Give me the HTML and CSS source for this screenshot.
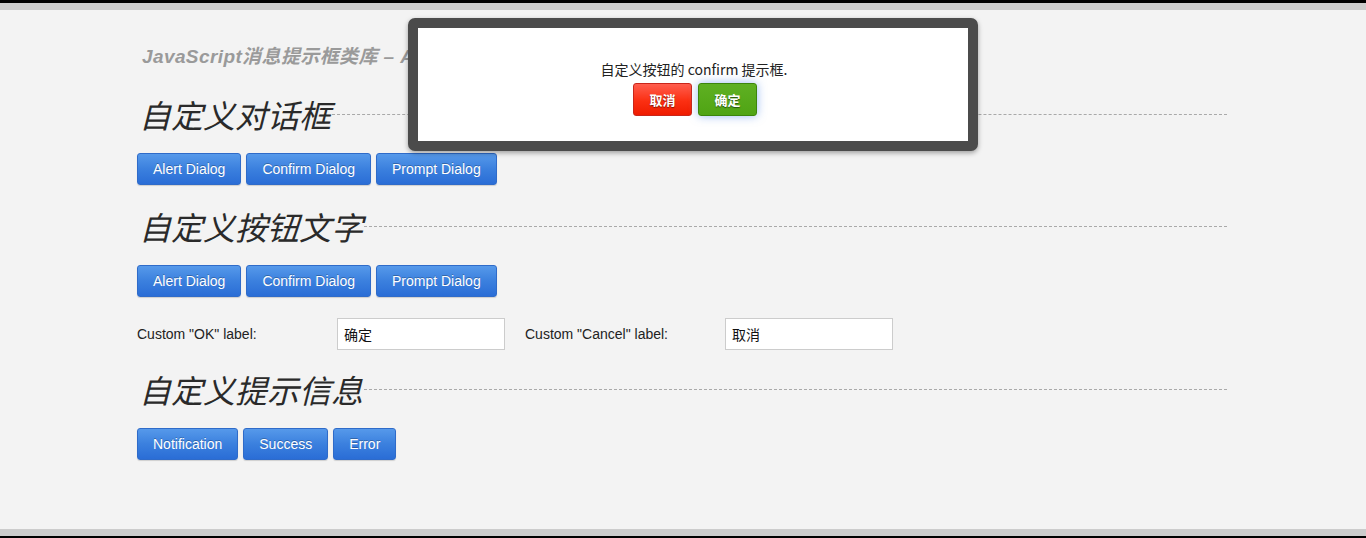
FILE: index.html
```html
<!DOCTYPE html>
<html lang="zh-CN">
<head>
<meta charset="utf-8">
<title>JavaScript消息提示框类库</title>
<link rel="stylesheet" href="styles.css">
</head>
<body>
<div class="frame">
  <div class="topbar"></div>
  <main class="page">
    <div class="container">
      <h1 class="title">JavaScript消息提示框类库 – Alertify.js</h1>

      <h2 class="heading">自定义对话框</h2>
      <div class="btn-row">
        <button class="btn">Alert Dialog</button>
        <button class="btn">Confirm Dialog</button>
        <button class="btn">Prompt Dialog</button>
      </div>

      <h2 class="heading heading-next">自定义按钮文字</h2>
      <div class="btn-row">
        <button class="btn">Alert Dialog</button>
        <button class="btn">Confirm Dialog</button>
        <button class="btn">Prompt Dialog</button>
      </div>
      <div class="form-row">
        <label class="field-label">Custom "OK" label:</label>
        <input class="field-input" type="text" value="确定">
        <label class="field-label field-label-2">Custom "Cancel" label:</label>
        <input class="field-input" type="text" value="取消">
      </div>

      <h2 class="heading heading-last">自定义提示信息</h2>
      <div class="btn-row">
        <button class="btn">Notification</button>
        <button class="btn">Success</button>
        <button class="btn">Error</button>
      </div>
    </div>
  </main>
  <div class="bottombar"></div>

  <div class="dialog">
    <div class="dialog-inner">
      <p class="dialog-msg">自定义按钮的 confirm 提示框.</p>
      <div class="dialog-buttons">
        <button class="dbtn dbtn-cancel">取消</button>
        <button class="dbtn dbtn-ok">确定</button>
      </div>
    </div>
  </div>
</div>
</body>
</html>
```

FILE: styles.css
```css
* { box-sizing: border-box; }

html, body {
  margin: 0;
  padding: 0;
  height: 100%;
}

body {
  background: #f3f3f3;
  font-family: "Liberation Sans", Arial, "Noto Sans CJK SC", sans-serif;
  color: #333;
  overflow: hidden;
}

.frame {
  height: 538px;
  display: flex;
  flex-direction: column;
  position: relative;
}

.topbar {
  height: 10px;
  border-top: 3px solid #000;
  background: #cccccc;
  flex: none;
}

.bottombar {
  height: 9px;
  background: #cccccc;
  border-bottom: 2px solid #000;
  flex: none;
}

.page {
  flex: 1;
  padding-top: 35px;
}

.container {
  width: 1090px;
  margin: 0 0 0 137px;
}

.title {
  margin: 0;
  padding-left: 5px;
  height: 24px;
  line-height: 24px;
  font-size: 19px;
  font-weight: bold;
  font-style: italic;
  color: #9a9a9a;
  font-family: "Liberation Sans", Arial, "Noto Sans CJK SC", sans-serif;
  letter-spacing: 0.4px;
}

.heading {
  margin: 25px 0 19px;
  height: 40px;
  line-height: 40px;
  display: flex;
  align-items: center;
  font-size: 32px;
  font-weight: 400;
  font-style: italic;
  color: #2a2a2a;
  font-family: "Noto Sans CJK SC", sans-serif;
  padding-left: 2px;
}

.heading::after {
  content: "";
  flex: 1;
  border-top: 1px dashed #a9a9a9;
  margin-left: 1px;
}

.heading-next { margin-top: 21px; }
.heading-last { margin-top: 19px; }

.btn-row {
  display: flex;
  gap: 5px;
  height: 32px;
}

.btn {
  height: 32px;
  padding: 0 15px;
  border: 1px solid #2f6bc9;
  border-radius: 3px;
  background: linear-gradient(to bottom, #5699ea 0%, #3b80de 50%, #2a6dd6 100%);
  color: #fff;
  font-family: "Liberation Sans", Arial, sans-serif;
  font-size: 14px;
  text-shadow: 0 -1px 0 rgba(0,0,0,0.25);
  box-shadow: 0 1px 1px rgba(0,0,0,0.15);
  cursor: pointer;
}

.form-row {
  display: flex;
  align-items: center;
  margin-top: 21px;
  height: 32px;
}

.field-label {
  width: 200px;
  font-size: 14px;
  color: #222;
  font-family: "Liberation Sans", Arial, sans-serif;
}

.field-label-2 { margin-left: 20px; }

.field-input {
  width: 168px;
  height: 32px;
  border: 1px solid #cccccc;
  background: #fff;
  padding: 0 6px;
  font-size: 14px;
  font-family: "Noto Sans CJK SC", sans-serif;
  color: #111;
}

.dialog {
  position: absolute;
  left: 408px;
  top: 18px;
  width: 570px;
  height: 133px;
  border: 10px solid #4b4b4b;
  border-radius: 7px;
  background: #fff;
  box-shadow: 0 2px 5px rgba(0,0,0,0.35);
}

.dialog-inner {
  height: 100%;
  padding-top: 32px;
  text-align: center;
}

.dialog-msg {
  margin: 0;
  height: 18px;
  line-height: 18px;
  font-size: 14px;
  color: #222;
  font-family: "Noto Sans CJK SC", sans-serif;
  padding-left: 2px;
}

.dialog-buttons {
  margin-top: 5px;
  display: flex;
  justify-content: center;
  gap: 6px;
  padding-left: 4px;
}

.dbtn {
  width: 59px;
  height: 33px;
  border-radius: 3px;
  color: #fff;
  font-size: 13px;
  font-weight: bold;
  font-family: "Noto Sans CJK SC", sans-serif;
  text-shadow: 0 1px 1px rgba(0,0,0,0.5);
  cursor: pointer;
  padding: 0;
}

.dbtn-cancel {
  background: linear-gradient(to bottom, #ff5e4e 0%, #fb2f12 55%, #ef1c00 100%);
  border: 1px solid #c9261a;
}

.dbtn-ok {
  background: linear-gradient(to bottom, #5fb022 0%, #4fa414 100%);
  border: 1px solid #3c850c;
  box-shadow: 0 0 10px rgba(70,130,230,0.55);
}
```
